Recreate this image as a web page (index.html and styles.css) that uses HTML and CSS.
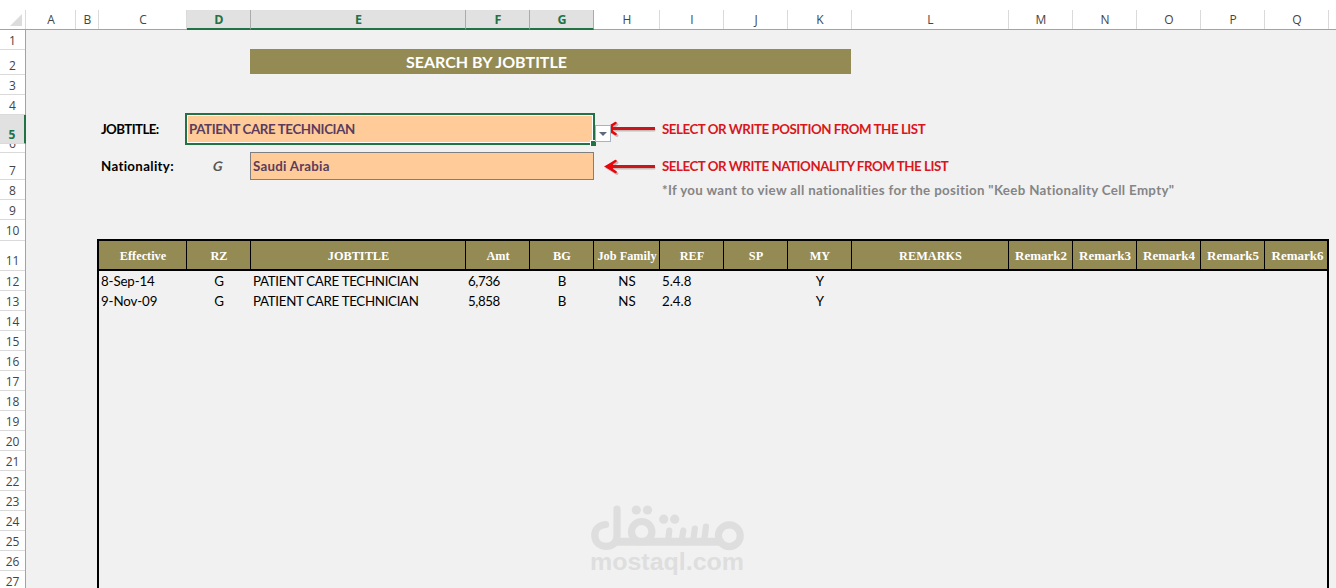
FILE: index.html
```html
<!DOCTYPE html>
<html lang="en">
<head>
<meta charset="utf-8">
<title>Search by Jobtitle</title>
<link rel="stylesheet" href="styles.css">
</head>
<body>
<div class="colheads">
  <div class="corner"><svg width="12" height="12" viewBox="0 0 12 12"><path d="M12 0V12H0Z" fill="#dcdcdc"/></svg></div>
  <div>A</div><div>B</div><div>C</div><div class="on">D</div><div class="on">E</div><div class="on">F</div><div class="on">G</div><div>H</div><div>I</div><div>J</div><div>K</div><div>L</div><div>M</div><div>N</div><div>O</div><div>P</div><div>Q</div>
</div>
<div class="main">
  <div class="rowheads">
    <div>1</div><div>2</div><div>3</div><div>4</div><div class="on">5</div><div>6</div><div>7</div><div>8</div><div>9</div><div class="up">10</div><div class="up">11</div><div>12</div><div>13</div><div>14</div><div>15</div><div>16</div><div>17</div><div>18</div><div>19</div><div>20</div><div>21</div><div>22</div><div>23</div><div>24</div><div>25</div><div>26</div><div>27</div>
  </div>
  <div class="sheet">
    <div class="banner"><span>SEARCH BY JOBTITLE</span></div>

    <div class="label job-label">JOBTITLE:</div>
    <div class="field job-field"><span>PATIENT CARE TECHNICIAN</span><i class="handle"></i></div>
    <svg class="arrow job-arrow" width="60" height="24" viewBox="0 0 60 24"><use href="#arrow"/></svg>
    <div class="drop"><svg width="8" height="4" viewBox="0 0 8 4"><path d="M0 0H8L4 4Z" fill="#5f6b7c"/></svg></div>
    <div class="hint job-hint">SELECT OR WRITE POSITION FROM THE LIST</div>

    <div class="label nat-label">Nationality:</div>
    <div class="zone"><span>G</span></div>
    <div class="field nat-field"><span>Saudi Arabia</span></div>
    <svg class="arrow nat-arrow" width="60" height="24" viewBox="0 0 60 24">
      <g id="arrow" fill="none" stroke-linecap="round">
        <path d="M7 13H52M15 7.500L6 13L15 18.500" stroke="#c9b9b9" stroke-width="3"/>
        <path d="M7 11.500H53" stroke="#c9161b" stroke-width="3" stroke-linecap="butt"/>
        <path d="M13.500 6L5 11.500L13.500 17" stroke="#e3060c" stroke-width="2.600"/>
        <path d="M2 11.500L11 7V16Z" fill="#e8060a"/>
      </g>
    </svg>
    <div class="hint nat-hint">SELECT OR WRITE NATIONALITY FROM THE LIST</div>
    <div class="note">*If you want to view all nationalities for the position "Keeb Nationality Cell Empty"</div>

    <div class="table">
      <div class="tr th">
        <div>Effective</div><div>RZ</div><div>JOBTITLE</div><div>Amt</div><div>BG</div><div>Job Family</div><div>REF</div><div>SP</div><div>MY</div><div>REMARKS</div><div class="wide">Remark2</div><div class="wide">Remark3</div><div class="wide">Remark4</div><div class="wide">Remark5</div><div class="wide">Remark6</div>
      </div>
      <div class="tr td">
        <div class="l date">8-Sep-14</div><div>G</div><div class="l title">PATIENT CARE TECHNICIAN</div><div class="l num">6,736</div><div>B</div><div>NS</div><div class="l">5.4.8</div><div></div><div>Y</div>
      </div>
      <div class="tr td">
        <div class="l date">9-Nov-09</div><div>G</div><div class="l title">PATIENT CARE TECHNICIAN</div><div class="l num">5,858</div><div>B</div><div>NS</div><div class="l">2.4.8</div><div></div><div>Y</div>
      </div>
    </div>

    <svg class="mark" width="160" height="80" viewBox="0 0 160 80">
      <g fill="none" stroke="#dedede" stroke-width="7.200" stroke-linecap="round" stroke-linejoin="round">
        <path d="M15.500 19.500C8.500 20 4.500 25 4.800 31C5.200 37.500 10 41.300 16 41.300C23 41.300 27 37 27 31V4"/>
        <path d="M26 36.700H130" stroke-width="8"/>
        <circle cx="51.700" cy="26.700" r="10.200"/>
        <circle cx="139.300" cy="30.700" r="10.900"/>
        <path d="M79.300 25.500L78 37M93.300 25.500L91.500 37M104.800 23.500L103 37M116 21.500L114 37" stroke-width="6.200"/>
      </g>
      <g fill="#dedede"><circle cx="46.300" cy="5" r="4.600"/><circle cx="57.500" cy="5" r="4.600"/><circle cx="73.700" cy="14.200" r="4.600"/><circle cx="84.700" cy="14.200" r="4.600"/></g>
      <text x="0" y="65" textLength="154" lengthAdjust="spacingAndGlyphs" class="mark-text">mostaql.com</text>
    </svg>
  </div>
</div>
</body>
</html>
```
FILE: styles.css
```css
* { box-sizing: border-box; }
body {
  margin: 0;
  padding-top: 10px;
  width: 1336px;
  height: 588px;
  overflow: hidden;
  background: #fff;
  font-family: Lato, "Liberation Sans", sans-serif;
  font-size: 13.3px;
  color: #000;
}
.colheads {
  display: grid;
  grid-template-columns: 26px 50px 23px 88px 64px 215px 64px 64px 66px 64px 64px 64px 157px repeat(5, 64px);
  height: 20px;
  border-bottom: 1px solid #9fa5a0;
  font: 12px/19px "Open Sans", "Noto Sans", sans-serif;
  color: #444;
  text-align: center;
}
.colheads > div { height: 19px; border-right: 1px solid #dadada; padding-left: 1px; }
.colheads .on {
  height: 20px;
  background: #e1e1e1;
  border-right-color: #ababab;
  border-bottom: 2px solid #217346;
  color: #217346;
  font-weight: 700;
  font-size: 12.500px;
}
.colheads .corner { display: flex; justify-content: flex-end; padding: 4px 3px 0 0; }
.main { display: flex; height: 558px; }
.rowheads {
  flex: none;
  width: 26px;
  display: grid;
  grid-template-rows: 20px 25px 20px 20px 29px 9px 27px 20px 20px 21px 30px repeat(16, 20px);
  border-right: 1px solid #9fa5a0;
  font: 12px/16px "Open Sans", "Noto Sans", sans-serif;
  color: #444;
  text-align: center;
}
.rowheads > div {
  display: flex;
  align-items: flex-end;
  justify-content: center;
  overflow: hidden;
  border-bottom: 1px solid #dadada;
}
.rowheads .up { padding-bottom: 1px; }
.rowheads .on {
  margin-right: -1px;
  background: #e1e1e1;
  border-right: 2px solid #217346;
  color: #217346;
  font-weight: 700;
}
.sheet {
  flex: 1;
  display: grid;
  grid-template-columns: 50px 23px 88px 64px 215px 64px 64px 66px 64px 64px 64px 157px repeat(5, 64px) 7px;
  grid-template-rows: 20px 25px 20px 20px 29px 9px 27px 20px 20px 21px 30px repeat(16, 20px);
  background: #f1f1f1;
  align-items: center;
}
.banner {
  grid-area: 2 / 5 / 3 / 13;
  align-self: start;
  width: 601px;
  height: 25px;
  margin: -1px 0 0 -1px;
  padding-right: 128px;
  background: #948a54;
  color: #fff;
  font-size: 16px;
  font-weight: 700;
  line-height: 25px;
  text-align: center;
}
.label { padding-left: 2px; margin-top: -1px; font-weight: 700; white-space: nowrap; }
.job-label { grid-area: 5 / 3; letter-spacing: -0.6px; }
.nat-label { grid-area: 7 / 3; letter-spacing: 0.33px; }
.field { background: #ffcc99; color: #5a3c5e; font-weight: 700; white-space: nowrap; }
.job-field {
  grid-area: 5 / 4 / 6 / 8;
  position: relative;
  width: 410px;
  height: 32px;
  margin: -1px 0 0 -2px;
  border: 2px solid #217346;
  box-shadow: inset 0 0 0 1px #fff;
  padding-left: 2px;
  line-height: 28px;
  letter-spacing: -0.37px;
}
.handle {
  position: absolute;
  right: -3px;
  bottom: -3px;
  width: 6px;
  height: 6px;
  background: #217346;
  border: solid #fff;
  border-width: 1px 0 0 1px;
}
.nat-field {
  grid-area: 7 / 5 / 8 / 8;
  width: 344px;
  height: 28px;
  margin: -1px 0 0 -1px;
  border: 1px solid #7f7f7f;
  padding-left: 2px;
  line-height: 26px;
  letter-spacing: 0.25px;
}
.zone { grid-area: 7 / 4; margin: -1px 2px 0 0; text-align: center; font-weight: 700; color: #555; }
.zone span { display: inline-block; transform: skewX(-12deg); }
.arrow { margin-left: 8px; }
.job-arrow { grid-area: 5 / 8; margin-top: -1px; }
.nat-arrow { grid-area: 7 / 8; }
.drop {
  grid-area: 5 / 8;
  align-self: end;
  position: relative;
  display: flex;
  align-items: center;
  justify-content: center;
  width: 16px;
  height: 17px;
  margin: 0 0 2px 1px;
  background: #fff;
  border: 1px solid #a5b5bd;
}
.hint { color: #d9161c; font-weight: 700; white-space: nowrap; padding-left: 2px; margin-top: -2px; letter-spacing: -0.45px; }
.job-hint { grid-area: 5 / 9; }
.nat-hint { grid-area: 7 / 9; }
.note { grid-area: 8 / 9; padding-left: 2px; color: #858585; font-weight: 700; white-space: nowrap; letter-spacing: 0.34px; }
.table {
  grid-area: 11 / 3 / 28 / 18;
  align-self: start;
  width: 1232px;
  height: 360px;
  margin: -2px 0 0 -2px;
  border: 2px solid #000;
}
.tr { display: grid; grid-template-columns: 88px 64px 215px 64px 64px 66px 64px 64px 64px 157px repeat(5, 64px); }
.th {
  height: 30px;
  border-bottom: 2px solid #000;
  background: #948a54;
  color: #fff;
  font: 700 12.300px/30px "Liberation Serif", serif;
  text-align: center;
}
.th > div { height: 28px; padding-left: 1px; border-right: 1px solid #000; white-space: nowrap; }
.th .wide { font-size: 13px; line-height: 29px; }
.th > div:last-child { border-right: 0; }
.td { height: 20px; line-height: 21px; text-align: center; }
.td > div { white-space: nowrap; }
.td .l { text-align: left; padding-left: 2px; }
.td .date { letter-spacing: -0.12px; }
.td .title { letter-spacing: -0.3px; }
.td .num { letter-spacing: -0.4px; }
.mark { grid-area: 24 / 8; align-self: start; margin: -6px 0 0 -4px; }
.mark-text { font: 700 23px "Liberation Sans", sans-serif; fill: #dedede; }
```
